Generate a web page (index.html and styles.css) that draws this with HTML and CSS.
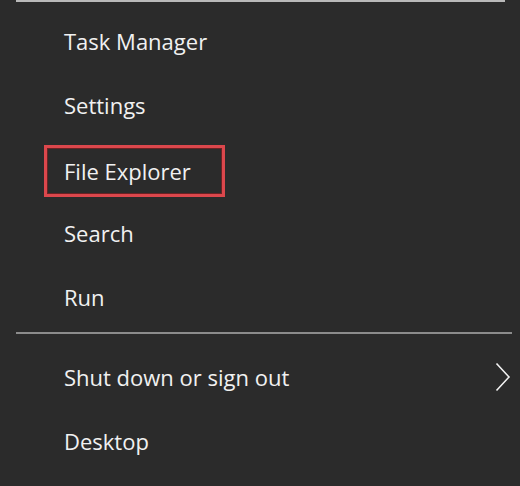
FILE: index.html
```html
<!DOCTYPE html>
<html>
<head>
<meta charset="utf-8">
<link rel="stylesheet" href="styles.css">
</head>
<body>
<div class="menu">
  <div class="top-rule"></div>
  <ul class="group">
    <li class="item">Task Manager</li>
    <li class="item">Settings</li>
    <li class="item"><span class="highlight">File Explorer</span></li>
    <li class="item">Search</li>
    <li class="item">Run</li>
  </ul>
  <div class="separator"></div>
  <ul class="group lower">
    <li class="item submenu">
      <span>Shut down or sign out</span>
      <svg class="chevron" width="16" height="30" viewBox="0 0 16 30"><path d="M1.5 1.5 L14 15 L1.5 28.5" fill="none" stroke="#f2f2f2" stroke-width="1.6"/></svg>
    </li>
    <li class="item">Desktop</li>
  </ul>
</div>
</body>
</html>
```
FILE: styles.css
```css
html, body {
  margin: 0;
  padding: 0;
  background: #2b2b2b;
}
.menu {
  width: 520px;
  height: 486px;
  overflow: hidden;
  font-family: "Open Sans", "Noto Sans", sans-serif;
  color: #f1f1f1;
  font-size: 22px;
}
.top-rule {
  height: 2px;
  margin: 0 15px 0 16px;
  background: #b9b9b9;
}
.group {
  list-style: none;
  margin: 0;
  padding: 0;
}
.group:first-of-type {
  padding-top: 7px;
}
.item {
  height: 64px;
  line-height: 64px;
  padding-left: 64px;
}
.highlight {
  display: inline-block;
  line-height: 46px;
  border: 3px solid #dc474c;
  box-shadow: inset 0 0 0 1px #6b2224;
  padding: 0 31px 0 17px;
  margin-left: -20px;
  vertical-align: -2px;
}
.separator {
  height: 2px;
  margin: 3px 8px 0 16px;
  background: #8c8c8c;
}
.lower {
  padding-top: 11px;
}
.submenu {
  display: flex;
  align-items: center;
  justify-content: space-between;
  padding-right: 9px;
}
.chevron {
  display: block;
}
```
